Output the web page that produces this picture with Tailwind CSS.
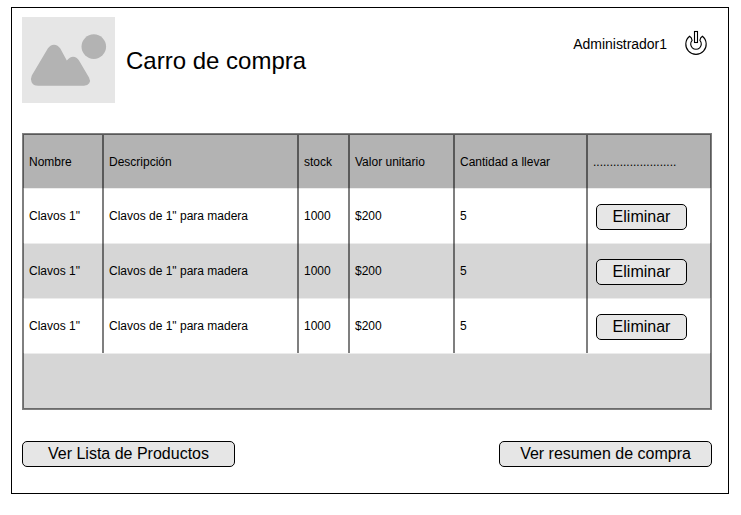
<!DOCTYPE html>
<html lang="es">
<head>
<meta charset="utf-8">
<title>Carro de compra</title>
<script src="https://cdn.jsdelivr.net/npm/@tailwindcss/browser@4"></script>
</head>
<body class="bg-white text-black font-['Liberation_Sans',Arial,sans-serif]">
<main class="ml-[11px] mt-[7px] w-[718px] h-[487px] border border-black px-[10px] pt-[9px] flex flex-col">
  <header class="flex h-[86px]">
    <svg class="w-[93px] h-[86px] shrink-0" viewBox="0 0 93 86">
      <rect width="93" height="86" fill="#e6e6e6"/>
      <circle cx="71.800" cy="29.600" r="12.300" fill="#b3b3b3"/>
      <path d="M9.800 58.500 L25.800 31.500 Q28.200 27.700 32 27.700 Q35.800 27.700 38.300 31.500 L44.800 43.600 Q47.800 39.700 51 39.700 Q54.800 39.900 57 43.500 L67 60.500 Q68.800 63.700 67.200 66.300 Q65.700 68.700 62 68.700 L16 68.700 Q11.300 68.700 9.600 65.200 Q8.200 62 9.800 58.500 Z" fill="#b3b3b3"/>
    </svg>
    <h1 class="ml-[11px] mt-[30px] text-[24px] leading-[28px] whitespace-nowrap">Carro de compra</h1>
    <div class="ml-auto flex h-7 mr-[10px]">
      <span class="mt-[19px] mr-[17px] text-[14px] leading-4 tracking-[-0.03px] whitespace-nowrap">Administrador1</span>
      <svg class="mt-[13px] w-6 h-[26px]" viewBox="0 0 24 26" fill="white" stroke="black" stroke-width="1.1">
        <path d="M5.600 6.200 A10.200 10.200 0 1 0 18.400 6.200 Q16.300 7.500 15.900 10.400 A5.300 5.300 0 1 1 8.100 10.400 Q7.700 7.500 5.600 6.200 Z"/>
        <rect x="10.500" y="1.500" width="3" height="11"/>
      </svg>
    </div>
  </header>

  <section class="mt-[30px] w-[690px] h-[277px] shrink-0 border border-[#808080] text-[12px] leading-[14px] whitespace-nowrap">
    <div class="grid grid-cols-[78px_195px_51px_105px_133px_124px] h-[54px] bg-[#b3b3b3] border-x border-t border-black/50">
      <div class="pl-[5px] pt-[20px]">Nombre</div>
      <div class="border-l-2 border-black/50 pl-[5px] pt-[20px]">Descripción</div>
      <div class="border-l-2 border-black/50 pl-[5px] pt-[20px]">stock</div>
      <div class="border-l-2 border-black/50 pl-[5px] pt-[20px]">Valor unitario</div>
      <div class="border-l-2 border-black/50 pl-[5px] pt-[20px]">Cantidad a llevar</div>
      <div class="border-l-2 border-black/50 pl-[5px] pt-[20px]">.........................</div>
    </div>
    <div class="grid grid-cols-[78px_195px_51px_105px_133px_124px] h-[55px] bg-white shadow-[inset_0_1px_#ececec] border-x border-black/50">
      <div class="pl-[5px] pt-[21px]">Clavos 1"</div>
      <div class="border-l-2 border-black/50 pl-[5px] pt-[21px]">Clavos de 1" para madera</div>
      <div class="border-l-2 border-black/50 pl-[5px] pt-[21px]">1000</div>
      <div class="border-l-2 border-black/50 pl-[5px] pt-[21px]">$200</div>
      <div class="border-l-2 border-black/50 pl-[5px] pt-[21px]">5</div>
      <div class="border-l-2 border-black/50 pl-[8px] pt-[16px]"><button class="block w-[91px] h-[26px] rounded-[5px] border border-black bg-[#e6e6e6] text-[16px] leading-[24px]">Eliminar</button></div>
    </div>
    <div class="grid grid-cols-[78px_195px_51px_105px_133px_124px] h-[55px] bg-[#d6d6d6] shadow-[inset_0_1px_#ececec] border-x border-black/50">
      <div class="pl-[5px] pt-[21px]">Clavos 1"</div>
      <div class="border-l-2 border-black/50 pl-[5px] pt-[21px]">Clavos de 1" para madera</div>
      <div class="border-l-2 border-black/50 pl-[5px] pt-[21px]">1000</div>
      <div class="border-l-2 border-black/50 pl-[5px] pt-[21px]">$200</div>
      <div class="border-l-2 border-black/50 pl-[5px] pt-[21px]">5</div>
      <div class="border-l-2 border-black/50 pl-[8px] pt-[16px]"><button class="block w-[91px] h-[26px] rounded-[5px] border border-black bg-[#e6e6e6] text-[16px] leading-[24px]">Eliminar</button></div>
    </div>
    <div class="grid grid-cols-[78px_195px_51px_105px_133px_124px] h-[55px] bg-white shadow-[inset_0_1px_#ececec] border-x border-black/50">
      <div class="pl-[5px] pt-[21px]">Clavos 1"</div>
      <div class="border-l-2 border-black/50 pl-[5px] pt-[21px]">Clavos de 1" para madera</div>
      <div class="border-l-2 border-black/50 pl-[5px] pt-[21px]">1000</div>
      <div class="border-l-2 border-black/50 pl-[5px] pt-[21px]">$200</div>
      <div class="border-l-2 border-black/50 pl-[5px] pt-[21px]">5</div>
      <div class="border-l-2 border-black/50 pl-[8px] pt-[16px]"><button class="block w-[91px] h-[26px] rounded-[5px] border border-black bg-[#e6e6e6] text-[16px] leading-[24px]">Eliminar</button></div>
    </div>
    <div class="h-[56px] bg-[#d6d6d6] shadow-[inset_0_1px_#ececec] border-x border-b border-black/50"></div>
  </section>

  <footer class="mt-[31px] w-[690px] flex justify-between">
    <button class="w-[213px] h-[26px] rounded-[5px] border border-black bg-[#e6e6e6] text-[16px] leading-[24px]">Ver Lista de Productos</button>
    <button class="w-[213px] h-[26px] rounded-[5px] border border-black bg-[#e6e6e6] text-[16px] leading-[24px]">Ver resumen de compra</button>
  </footer>
</main>
</body>
</html>
